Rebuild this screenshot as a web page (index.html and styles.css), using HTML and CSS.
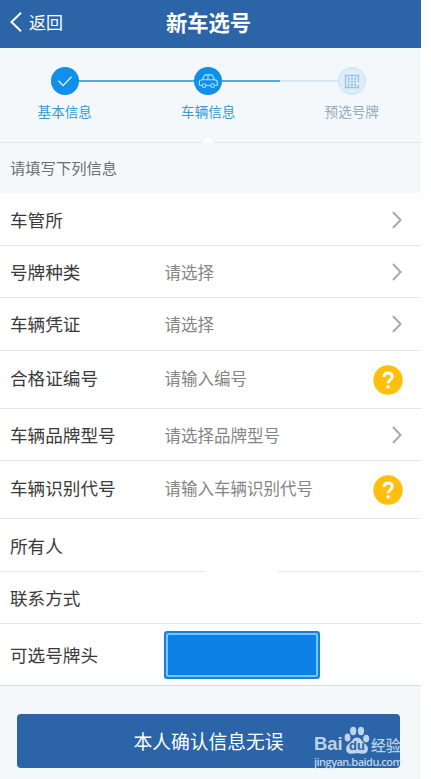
FILE: index.html
```html
<!DOCTYPE html>
<html lang="zh-CN">
<head>
<meta charset="utf-8">
<title>新车选号</title>
<link rel="stylesheet" href="styles.css">
</head>
<body>
<div class="app">
  <header class="nav">
    <a class="back"><svg width="12" height="20" viewBox="0 0 12 20"><path d="M11 .8 1.500 10l9.500 9.200" fill="none" stroke="#fff" stroke-width="2"/></svg><span>返回</span></a>
    <h1>新车选号</h1>
  </header>
  <section class="steps">
    <div class="step">
      <span class="dot"><svg width="28" height="28" viewBox="0 0 28 28"><path d="m7.500 13.800 4.600 4.800 8.400-8.800" fill="none" stroke="#e4fbff" stroke-width="1.300"/></svg></span>
      <span class="name">基本信息</span>
    </div>
    <div class="step">
      <span class="dot"><svg width="28" height="28" viewBox="0 0 28 28" fill="none" stroke="#a9e8f8" stroke-width="1.100"><path d="M8.200 18.500H6.300c-.6 0-.9-.4-.9-1v-2.800c0-1 .6-1.600 1.500-1.700l1.400-.2 2-4c.3-.6.7-.9 1.400-.9h5.400c.7 0 1.200.3 1.500.9l2 4 1.400.3c.9.2 1.300.8 1.300 1.700v2.700c0 .6-.3 1-.9 1h-1.100M12 18.500h4.600M8.300 12.800h12.300M14 8v4.800"/><circle cx="10" cy="18.600" r="1.900"/><circle cx="18.600" cy="18.600" r="1.900"/></svg></span>
      <span class="name">车辆信息</span>
    </div>
    <div class="step pending">
      <span class="dot"><svg width="26" height="26" viewBox="0 0 26 26" fill="none" stroke="#a0c0d8"><path d="M19.500 14.500V7.500h-13v12h13v-2.500" stroke-width="1.300"/><path d="M9.700 9.500v8.500M13 9.500v8.500M16.300 9.500v8.500" stroke-width="1.800" stroke-dasharray="2.200 .9"/></svg></span>
      <span class="name">预选号牌</span>
    </div>
    <svg class="pointer" width="14" height="9" viewBox="0 0 14 9"><path d="M0 9 7 1l7 8z" fill="#fff"/><path d="M0 8.500 7 .700l7 7.800" fill="none" stroke="#e3e8ea" stroke-width=".7"/></svg>
  </section>
  <div class="hint">请填写下列信息</div>
  <main class="form">
    <div class="row first"><label>车管所</label><span class="value"></span><svg class="arrow" viewBox="0 0 10 18"><path d="m1 1 7.500 8L1 17"/></svg></div>
    <div class="row short"><label>号牌种类</label><span class="value">请选择</span><svg class="arrow" viewBox="0 0 10 18"><path d="m1 1 7.500 8L1 17"/></svg></div>
    <div class="row"><label>车辆凭证</label><span class="value">请选择</span><svg class="arrow" viewBox="0 0 10 18"><path d="m1 1 7.500 8L1 17"/></svg></div>
    <div class="row tall"><label>合格证编号</label><span class="value">请输入编号</span><svg class="help" viewBox="0 0 30 30"><circle cx="15" cy="15" r="14.700"/><path d="M11 12.100c0-2.600 1.700-4.100 4.100-4.100s4.100 1.500 4.100 3.700c0 3.200-4.100 3.100-4.100 6.500"/><rect x="13.500" y="20.300" width="3.300" height="3.200" rx="1"/></svg></div>
    <div class="row short"><label>车辆品牌型号</label><span class="value">请选择品牌型号</span><svg class="arrow" viewBox="0 0 10 18"><path d="m1 1 7.500 8L1 17"/></svg></div>
    <div class="row tall"><label>车辆识别代号</label><span class="value">请输入车辆识别代号</span><svg class="help" viewBox="0 0 30 30"><circle cx="15" cy="15" r="14.700"/><path d="M11 12.100c0-2.600 1.700-4.100 4.100-4.100s4.100 1.500 4.100 3.700c0 3.200-4.100 3.100-4.100 6.500"/><rect x="13.500" y="20.300" width="3.300" height="3.200" rx="1"/></svg></div>
    <div class="row broken"><label>所有人</label></div>
    <div class="row short"><label>联系方式</label></div>
    <div class="row plate-row"><label>可选号牌头</label><span class="plate"><span class="plate-inner"></span></span></div>
  </main>
  <footer class="actions">
    <button class="submit">本人确认信息无误</button>
    <div class="watermark">
      <div class="brand">
        <span class="bai">Bai</span>
        <span class="paw"><svg width="26" height="29" viewBox="0 0 26 29" fill="currentColor"><ellipse cx="9.200" cy="5" rx="3.100" ry="4.200"/><ellipse cx="17" cy="5" rx="3.100" ry="4.200"/><ellipse cx="3.500" cy="11.500" rx="2.900" ry="4"/><ellipse cx="22.200" cy="12.500" rx="3" ry="3.800"/><path d="M13 11.500c-3.600 0-4.400 3.200-6.700 5.100-2.400 2-4.200 3.500-4.200 6.200 0 3 2 5 5 5 2.200 0 3.900-.6 5.900-.6s3.700.6 5.900.6c3 0 5-2 5-5 0-2.700-1.800-4.200-4.200-6.200-2.300-1.900-3.100-5.100-6.700-5.100z"/></svg><b>du</b></span>
        <span class="cn">经验</span>
      </div>
      <div class="url">jingyan.baidu.com</div>
    </div>
  </footer>
</div>
</body>
</html>
```
FILE: styles.css
```css
* { box-sizing: border-box; }
body {
  margin: 0;
  background: #fff;
  font-family: "Noto Sans CJK SC", sans-serif;
}
.app {
  width: 421px;
  height: 779px;
  display: flex;
  flex-direction: column;
  background: #f4f8fa;
  overflow: hidden;
}
.nav {
  height: 48px;
  flex: none;
  display: grid;
  grid-template-columns: 1fr auto 1fr;
  align-items: center;
  padding: 0 14px 4px 10px;
  background: #2b65a8;
  color: #fff;
}
.back {
  display: flex;
  align-items: center;
  gap: 7px;
  font-size: 17px;
  line-height: 24px;
}
.back span { margin-top: -1px; }
.nav h1 {
  margin: 0;
  font-size: 21.3px;
  line-height: 30px;
  font-weight: 700;
}
.steps {
  position: relative;
  height: 95px;
  flex: none;
  display: flex;
  margin-left: -7px;
  padding: 19px 4px 0 0;
  border-bottom: 1px solid #dfe4e6;
  background: linear-gradient(#4eacd8, #4eacd8) 72px 32px / 215px 2px no-repeat,
    linear-gradient(#d5e7f4, #d5e7f4) 287px 32px / 72px 2px no-repeat;
}
.step {
  width: 143.5px;
  flex: none;
  display: flex;
  flex-direction: column;
  align-items: center;
}
.dot {
  width: 28px;
  height: 28px;
  display: grid;
  place-items: center;
  border-radius: 50%;
  background: #118fea;
}
.pending .dot {
  background: #dceefb;
  border: 1px solid #c9e0f0;
}
.name {
  margin-top: 6px;
  font-size: 13.6px;
  line-height: 20px;
  color: #309bd4;
}
.pending .name { color: #93acba; }
.pointer {
  position: absolute;
  left: 208px;
  bottom: -1px;
}
.hint {
  height: 50px;
  flex: none;
  padding: 1px 0 0 10px;
  font-size: 15.3px;
  line-height: 47px;
  color: #6d7072;
}
.form { flex: none; background: #fff; }
.row {
  height: 53px;
  display: flex;
  align-items: center;
  padding: 0 18px 0 10px;
  border-bottom: 1px solid #e3e4e5;
}
.row.first { padding-top: 2px; }
.row.short { height: 52px; }
.row.tall { height: 58px; }
.row.broken {
  border-bottom: 0;
  background: linear-gradient(90deg, #e6e7e8 205px, #fff 205px 277px, #e6e7e8 277px) bottom / 100% 1px no-repeat;
}
.row.plate-row { height: 62px; border-bottom-color: #d8dcde; }
.row label {
  width: 154.5px;
  flex: none;
  font-size: 17.6px;
  line-height: 26px;
  color: #3a3a3a;
}
.value {
  flex: 1;
  font-size: 16.5px;
  line-height: 26px;
  color: #858585;
}
.tall label, .tall .value { padding-bottom: 4px; }
.arrow {
  width: 10px;
  height: 18px;
  margin-right: 1px;
  fill: none;
  stroke: #aaa;
  stroke-width: 2;
}
.help { width: 30px; height: 30px; }
.help circle { fill: #ffbf0a; }
.help path { fill: none; stroke: #fff; stroke-width: 2.8; }
.help rect { fill: #fff; }
.plate {
  width: 156px;
  height: 48px;
  margin-left: -.5px;
  padding: 2px;
  border-radius: 3px;
  background: #1583de;
}
.plate-inner {
  display: block;
  height: 100%;
  border: 2px solid #79c5f1;
  border-radius: 2px;
  background: #0d80e6;
}
.actions {
  position: relative;
  flex: 1;
  padding: 28px 21px 0 17px;
}
.submit {
  display: block;
  width: 100%;
  height: 54px;
  padding: 0;
  border: 0;
  border-radius: 4px;
  background: #2b65a8;
  color: #fff;
  font: 18.8px/54px "Noto Sans CJK SC", sans-serif;
}
.watermark {
  position: absolute;
  left: 314px;
  top: 40px;
  width: 92px;
  color: rgba(220, 231, 246, .85);
}
.brand {
  display: flex;
  height: 29px;
}
.bai {
  width: 30px;
  flex: none;
  padding-top: 8px;
  font: 700 18.4px/20px "Liberation Sans", sans-serif;
}
.paw {
  position: relative;
  width: 26px;
  flex: none;
}
.paw b {
  position: absolute;
  left: 5px;
  top: 13px;
  font: 700 13px/14px "Liberation Sans", sans-serif;
  color: #2b65a8;
}
.cn {
  padding: 9px 0 0 1px;
  font-size: 14.8px;
  font-weight: 500;
  line-height: 20px;
  white-space: nowrap;
}
.url {
  font: 600 11px/14px "Open Sans", sans-serif;
  letter-spacing: -.52px;
  white-space: nowrap;
}
```
